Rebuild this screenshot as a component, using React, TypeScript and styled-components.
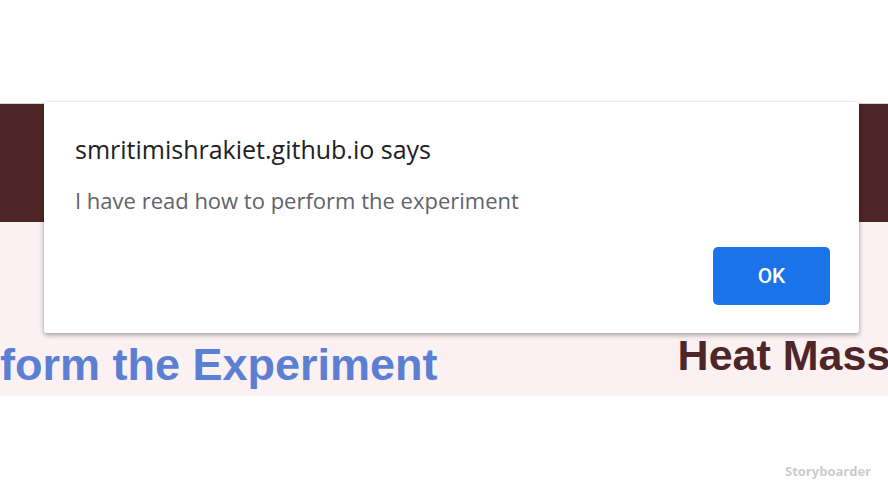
import styled, { createGlobalStyle } from 'styled-components';

const GlobalStyle = createGlobalStyle`
    html, body {
        margin: 0;
        padding: 0;
        background: #ffffff;
    }
    body {
        width: 888px;
        height: 499px;
        overflow: hidden;
        font-family: "Open Sans", "Noto Sans", sans-serif;
    }
`;

const Screen = styled.div`
    position: relative;
    width: 888px;
    height: 499px;
    padding-top: 103px;
    box-sizing: border-box;
`;

const Page = styled.div`
    width: 100%;
    border-top: 1px solid #d8d4d6;
    background: #fbf1f2;
`;

const Header = styled.div`
    height: 118px;
    background: #4f2627;
`;

const Content = styled.div`
    height: 174px;
    display: flex;
    gap: 240px;
    align-items: flex-start;
    overflow: hidden;
`;

const Heading = styled.h1<{ $color: string; $size: number; $top: number }>`
    flex-shrink: 0;
    margin: ${({ $top }) => $top}px 0 0;
    font-family: "Liberation Sans", Arial, sans-serif;
    font-weight: 700;
    font-size: ${({ $size }) => $size}px;
    line-height: 1;
    color: ${({ $color }) => $color};
    white-space: nowrap;
`;

const Dialog = styled.div`
    position: absolute;
    left: 44px;
    top: 102px;
    width: 815px;
    height: 231px;
    box-sizing: border-box;
    padding: 30px 29px 28px 31px;
    background: #ffffff;
    border-radius: 2px;
    box-shadow: 0 2px 5px rgba(0, 0, 0, 0.35), 0 0 1px rgba(0, 0, 0, 0.2);
    display: flex;
    flex-direction: column;
`;

const Title = styled.div`
    font-size: 25px;
    line-height: 34px;
    color: #202124;
`;

const Message = styled.div`
    margin-top: 19px;
    font-size: 22px;
    line-height: 30px;
    color: #5f6368;
`;

const Actions = styled.div`
    margin-top: auto;
    display: flex;
    justify-content: flex-end;
`;

const OkButton = styled.button`
    width: 117px;
    height: 58px;
    border: 0;
    border-radius: 5px;
    background: #1a73e8;
    color: #ffffff;
    font-family: Roboto, "Liberation Sans", sans-serif;
    font-size: 21px;
    font-weight: 500;
    cursor: pointer;
`;

const Watermark = styled.div`
    position: absolute;
    right: 17px;
    bottom: 19px;
    font-family: "Open Sans", sans-serif;
    font-size: 13px;
    font-weight: 700;
    color: #cbcbcb;
`;

const App = () => (
  <>
    <GlobalStyle />
    <Screen>
      <Page>
        <Header />
        <Content>
          <Heading $color="#5b7fd2" $size={45} $top={120}>form the Experiment</Heading>
          <Heading $color="#4f2627" $size={43} $top={112}>Heat Mass Transfer</Heading>
        </Content>
      </Page>
      <Dialog>
        <Title>smritimishrakiet.github.io says</Title>
        <Message>I have read how to perform the experiment</Message>
        <Actions>
          <OkButton type="button">OK</OkButton>
        </Actions>
      </Dialog>
      <Watermark>Storyboarder</Watermark>
    </Screen>
  </>
);

export default App;
